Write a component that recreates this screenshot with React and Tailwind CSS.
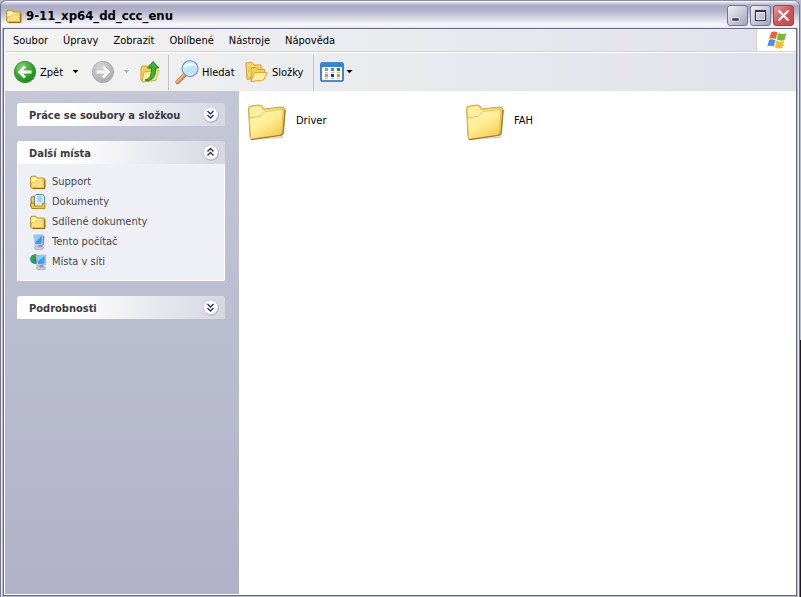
import React from "react";

const SmallFolder = ({ className = "w-4 h-4" }) => (
  <svg viewBox="0 0 16 16" className={className} aria-hidden="true">
    <path d="M0.600 4Q0.600 2.200 2.200 2.200H5.800L7.300 4H13.200Q14.800 4 14.800 5.500V13L13.500 14.500H2.200L0.600 13Z" fill="#e9bb3c" stroke="#b98d1c" strokeWidth="0.900" />
    <path d="M1.300 4.300Q1.300 3 2.800 3H5.500L7 4.800H13V7H6.500L5 9H1.300Z" fill="#fff4ae" />
    <path d="M1.500 13.500V8.500H5L6.500 6.800H13.500V13.500Z" fill="#fde27c" stroke="#e2ae2c" strokeWidth="0.600" />
    <path d="M14.900 5.500V14.600H3" fill="none" stroke="#80601a" strokeWidth="0.900" />
  </svg>
);

const DocumentsIcon = () => (
  <svg viewBox="0 0 16 16" className="w-4 h-4" aria-hidden="true">
    <path d="M1 4Q1 2.500 2.500 2.500H7V14.500H2.500L1 13Z" fill="#f3c94a" stroke="#a87a10" />
    <path d="M6 0.500H12.500L14.500 2.500V11H4.500V2Z" fill="#eaf5ff" stroke="#4a86c8" />
    <path d="M7 3H12M7 5H12.500M7 7H12.500" stroke="#6db1ea" />
    <path d="M1 9H4.500V12H12.500V9H15V14.500H2L1 13.500Z" fill="#f3c64a" stroke="#a87a10" strokeWidth="0.800" />
    <path d="M5 9H12V11.500H5Z" fill="#d7e8f6" />
  </svg>
);

const ComputerIcon = () => (
  <svg viewBox="0 0 16 16" className="w-4 h-4" aria-hidden="true">
    <ellipse cx="9" cy="13.800" rx="4.700" ry="1.900" fill="#cfcee3" stroke="#8785ab" strokeWidth="0.600" />
    <path d="M8 10L12 9.500V13L8.500 13.500Z" fill="#9390b8" />
    <path d="M12 1L14.500 2L13.800 11L11 12Z" fill="#7f86b4" />
    <path d="M3.500 0.800L13 0.600L12.500 10.800L5 11.200Z" fill="#d5e0f3" stroke="#a0b0d4" strokeWidth="0.500" />
    <path d="M4.500 1.700L12.200 1.500L11.700 9.800L5.600 10.200Z" fill="#3a9fee" />
    <path d="M4.500 1.700L12.200 1.500L5.300 8Z" fill="#86d0fb" />
  </svg>
);

const NetworkIcon = () => (
  <svg viewBox="0 0 16 16" className="w-4 h-4" aria-hidden="true">
    <circle cx="5" cy="5.200" r="4.800" fill="#2677ca" />
    <path d="M1 3Q3 0 6 0.600L7 4L4 5L5 9.500Q1 8.500 0.300 5Z" fill="#35a43a" />
    <ellipse cx="11" cy="14" rx="4.600" ry="1.800" fill="#cfcee3" stroke="#8785ab" strokeWidth="0.600" />
    <path d="M9.500 10H13.500V13.500H10Z" fill="#9390b8" />
    <path d="M6 1.500L15.600 1V10.500L7 11.500Z" fill="#d5e0f3" stroke="#8c9ac6" strokeWidth="0.700" />
    <path d="M7 2.500L14.700 2V9.500L8 10.300Z" fill="#3a9fee" />
    <path d="M7 2.500L14.700 2L7.600 7.500Z" fill="#86d0fb" />
  </svg>
);

const LargeFolder = () => (
  <svg viewBox="0 0 40 40" className="w-10 h-10 shrink-0" aria-hidden="true">
    <defs>
      <linearGradient id="folderFront" x1="0" y1="0" x2="0.700" y2="1">
        <stop offset="0" stopColor="#fff8b8" />
        <stop offset="0.500" stopColor="#ffee98" />
        <stop offset="1" stopColor="#f9cd50" />
      </linearGradient>
    </defs>
    <path d="M5 39L36 35L39 9L36 37Z" fill="#b5a98a" opacity="0.500" />
    <path d="M3 36L1.500 8Q1.500 5 4.500 5L12 4Q15 4 16 6.500L17 8L34 6Q38 6 38 9L36 32Q36 34 34 34L5 38Z" fill="#f3cd5b" stroke="#cfa745" />
    <path d="M2.500 9Q2.500 6 5 6L12 5Q14 5 15 8L16 9.500L33 7.500L35 10L18 12L14 16L3.500 17Z" fill="#fff0a0" />
    <path d="M2.500 18.500Q2.500 16.500 5 16.500L13 15.500L18 10.500L34 8.500Q36.500 8.500 36 11.500L34.500 31Q34.500 33.500 32 34L5 38.300Q3.500 38.500 3.500 36Z" fill="url(#folderFront)" stroke="#dfb548" strokeWidth="0.800" />
    <path d="M4 38.600L33 34.500Q36 34 36.300 31L38.200 9" fill="none" stroke="#98762a" strokeWidth="1.200" />
  </svg>
);

const RoundArrow = ({ forward = false }) => (
  <svg viewBox="0 0 24 24" className="w-6 h-6 shrink-0" aria-hidden="true">
    <defs>
      <radialGradient id="backFill" cx="0.350" cy="0.250" r="0.800">
        <stop offset="0" stopColor="#7cd56d" />
        <stop offset="0.500" stopColor="#3fac35" />
        <stop offset="1" stopColor="#16851a" />
      </radialGradient>
      <radialGradient id="forwardFill" cx="0.350" cy="0.250" r="0.800">
        <stop offset="0" stopColor="#d6d6d6" />
        <stop offset="1" stopColor="#a9a9a9" />
      </radialGradient>
    </defs>
    <circle
      cx="12"
      cy="12"
      r="10.600"
      fill={forward ? "url(#forwardFill)" : "url(#backFill)"}
      stroke={forward ? "#adadad" : "#2d8f2c"}
    />
    <path
      d={forward ? "M5.500 12H17M12 6.500L17.500 12L12 17.500" : "M18.500 12H7M12 6.500L6.500 12L12 17.500"}
      fill="none"
      stroke={forward ? "#f7f7f7" : "#fff"}
      strokeWidth="2.800"
    />
  </svg>
);

const UpFolderIcon = () => (
  <svg viewBox="0 0 22 24" className="w-[22px] h-6" aria-hidden="true">
    <path d="M2 8L3 6H8L10 8L17 7V20L4 22L2 20Z" fill="#f5ce5a" stroke="#d3a12c" />
    <path d="M5 12L20 10L17 20L3 22Z" fill="#fff0a0" stroke="#dcae3b" />
    <path d="M6 20Q13 19 12.500 8H8.500L14 1.500L20 8H16.500Q18 18 9 21Z" fill="#3cb234" stroke="#1b7d1b" strokeWidth="0.900" />
  </svg>
);

const SearchIcon = () => (
  <svg viewBox="0 0 26 26" className="w-[26px] h-[26px]" aria-hidden="true">
    <path d="M3.500 23L11 15.500" stroke="#b06a35" strokeWidth="4.200" strokeLinecap="round" />
    <path d="M3.200 22.700L11 15" stroke="#f0aa6e" strokeWidth="2.800" strokeLinecap="round" />
    <circle cx="16" cy="9.500" r="7.800" fill="#bfe4fd" stroke="#7c9bd6" strokeWidth="1.600" />
    <path d="M10.500 9Q11 4 16 4Q20 4 21 7Q15 6 10.500 9Z" fill="#f4fcff" />
    <circle cx="16" cy="9.500" r="6.700" fill="none" stroke="#f0f9ff" strokeWidth="0.800" />
  </svg>
);

const FoldersIcon = () => (
  <svg viewBox="0 0 24 24" className="w-6 h-6" aria-hidden="true">
    <path d="M1 4Q1 2.500 2.500 2.500H7L9 5H16V17L2 19.500Z" fill="#f9d767" stroke="#d3a12c" />
    <path d="M2.500 17L4 8H18L15 17Z" fill="#ffef9f" stroke="#dcb041" strokeWidth="0.800" />
    <path d="M6 9L7 7.500H11L13 9.500H19.500V19L6 21.500Z" fill="#f7cf59" stroke="#d3a12c" />
    <path d="M6 21.500L9.500 12.500H22.500L18.500 20Z" fill="#fff0a0" stroke="#d7a532" strokeWidth="0.900" />
  </svg>
);

const ViewsIcon = () => (
  <svg viewBox="0 0 24 20" className="w-6 h-5" aria-hidden="true">
    <rect x="1" y="1" width="22" height="18" rx="1" fill="#fff" stroke="#1769be" strokeWidth="1.600" />
    <path d="M1 1H23V5H1Z" fill="#2b86dc" />
    <rect x="5" y="6" width="3" height="3" fill="#9b98bd" />
    <rect x="11" y="6" width="3" height="3" fill="#3e8ad8" />
    <rect x="17" y="6" width="3" height="3" fill="#258d2e" />
    <rect x="5" y="12" width="3" height="3" fill="#ee8150" />
    <rect x="11" y="12" width="3" height="3" fill="#17368d" />
    <rect x="17" y="12" width="3" height="3" fill="#c5a12d" />
    <path d="M5 10.500H8M11 10.500H14M17 10.500H20M5 16.500H8M11 16.500H14M17 16.500H20" stroke="#b7c2d4" />
  </svg>
);

const Caret = ({ className = "text-black" }) => (
  <svg viewBox="0 0 7 4" className={`w-[7px] h-1 shrink-0 ${className}`} aria-hidden="true">
    <path d="M0.500 0H6.500L3.500 3.200Z" fill="currentColor" />
  </svg>
);

const WindowsFlag = () => (
  <svg viewBox="0 0 20 18" className="w-5 h-[18px]" aria-hidden="true">
    <path d="M4 1.500Q7 -0.500 10.500 1.500L8.800 8Q5.500 6.500 2.300 8Z" fill="#ec6430" />
    <path d="M11.500 2Q15 4 19.500 2.200L17.500 9Q14 10.500 9.800 8.500Z" fill="#7cbb31" />
    <path d="M2 9Q5 7.500 8.500 9L6.800 15.500Q3.500 14 0.300 15.500Z" fill="#4c8fe4" />
    <path d="M9.500 9.600Q13 11.500 17.200 10L15.500 16.500Q12 18.500 7.800 16.200Z" fill="#f7bd2b" />
  </svg>
);

const Chevrons = ({ up = false }) => (
  <svg viewBox="0 0 18 18" className="w-[18px] h-[18px]" aria-hidden="true">
    <circle cx="9.200" cy="9" r="7.900" fill="#b4b6c8" />
    <circle cx="8.700" cy="8.300" r="7.300" fill="#fff" stroke="#c8c9d6" strokeWidth="0.700" />
    <path
      d={up ? "M5.500 7.500L8.500 4.500L11.500 7.500M5.500 11.500L8.500 8.500L11.500 11.500" : "M5.500 5L8.500 8L11.500 5M5.500 9L8.500 12L11.500 9"}
      fill="none"
      stroke="#2a3155"
      strokeWidth="1.400"
    />
  </svg>
);

const CaptionButton = ({ label, close = false, children }) => (
  <button
    type="button"
    aria-label={label}
    className={`w-[21px] h-[21px] rounded-[3px] border flex items-center justify-center ${
      close
        ? "border-[#8a4a5c] bg-linear-to-br from-[#e99a98] via-[#d0575a] to-[#c4494f]"
        : "border-[#74768f] bg-linear-to-br from-[#f4f4f8] via-[#c9cada] to-[#a2a4bd]"
    }`}
  >
    <svg viewBox="0 0 19 19" className="w-[19px] h-[19px]" aria-hidden="true">
      {children}
    </svg>
  </button>
);

const TitleBar = () => (
  <header className="h-7 pl-[5px] pr-[5px] pt-0.5 flex items-center justify-between rounded-t-md border-t border-[#8e8da6] bg-[linear-gradient(180deg,#ffffff_0%,#d3d3e0_7%,#a9a9c4_18%,#b3b3ca_35%,#d2d2e0_60%,#f8f8fb_88%,#e6e6ef_100%)]">
    <div className="flex items-center gap-1">
      <SmallFolder />
      <h1 className="pt-px text-[13px] leading-4 font-bold text-black">9-11_xp64_dd_ccc_enu</h1>
    </div>
    <div className="flex gap-0.5">
      <CaptionButton label="Minimalizovat">
        <path d="M4 12H11V15H4Z" fill="#343650" stroke="#fff" strokeWidth="0.500" />
      </CaptionButton>
      <CaptionButton label="Maximalizovat">
        <path d="M4.500 4.500H14.500V14.500H4.500Z" fill="none" stroke="#343650" strokeWidth="1.200" />
        <path d="M4 5H15" stroke="#343650" strokeWidth="2" />
        <path d="M5.500 6.500H13.500V13.500H5.500Z" fill="none" stroke="#f4f4fa" strokeWidth="0.700" />
      </CaptionButton>
      <CaptionButton label="Zavřít" close>
        <path d="M4.500 4.500L14.500 14.500M14.500 4.500L4.500 14.500" stroke="#fff" strokeWidth="2.200" />
      </CaptionButton>
    </div>
  </header>
);

const menus = ["Soubor", "Úpravy", "Zobrazit", "Oblíbené", "Nástroje", "Nápověda"];

const MenuBar = () => (
  <nav className="h-6 flex border-b border-white bg-linear-to-r from-[#f3f3f1] to-[#e0e2ec]">
    <div className="flex-1 flex items-center gap-[15px] pt-0.5 pl-2 border-b border-[#d7d3c3]">
      {menus.map((menu) => (
        <button key={menu} type="button">
          {menu}
        </button>
      ))}
    </div>
    <div className="w-10 flex items-center justify-center bg-white border-l border-b border-[#d7d3c3]">
      <WindowsFlag />
    </div>
  </nav>
);

const Separator = () => <div className="w-px h-[35px] bg-[#c1c1c6]" />;

const Toolbar = () => (
  <div className="h-[38px] flex items-center pl-2 bg-linear-to-r from-[#f3f3f1] to-[#e0e2ec]">
    <button type="button" className="w-[78px] flex items-center gap-[3px]">
      <RoundArrow />
      <span className="pt-px">Zpět</span>
      <Caret className="ml-1.5 text-black" />
    </button>
    <button type="button" aria-label="Vpřed" disabled className="w-12 flex items-center gap-2">
      <RoundArrow forward />
      <Caret className="text-[#b5b5b5]" />
    </button>
    <button type="button" aria-label="Nahoru" className="w-[29px]">
      <UpFolderIcon />
    </button>
    <Separator />
    <button type="button" className="w-[76px] pl-[5px] flex items-center gap-0.5">
      <SearchIcon />
      <span className="pt-px">Hledat</span>
    </button>
    <button type="button" className="w-[68px] flex items-center gap-[3px]">
      <FoldersIcon />
      <span className="pt-px">Složky</span>
    </button>
    <Separator />
    <button type="button" aria-label="Zobrazení" className="pl-1.5 flex items-center gap-0.5">
      <ViewsIcon />
      <Caret />
    </button>
  </div>
);

const places = [
  { name: "Support", Icon: SmallFolder },
  { name: "Dokumenty", Icon: DocumentsIcon },
  { name: "Sdílené dokumenty", Icon: SmallFolder },
  { name: "Tento počítač", Icon: ComputerIcon },
  { name: "Místa v síti", Icon: NetworkIcon },
];

const TaskPanel = ({ title, open = false, children }) => (
  <section>
    <h2>
      <button
        type="button"
        aria-expanded={open}
        className="w-full h-[23px] pl-3 pr-[5px] flex items-center justify-between rounded-t-[3px] bg-linear-to-r from-white from-25% to-[#d5d7e1] font-bold text-[#3a3a3f]"
      >
        <span className="pt-0.5">{title}</span>
        <Chevrons up={open} />
      </button>
    </h2>
    {children}
  </section>
);

const Sidebar = () => (
  <aside className="w-[234px] shrink-0 pt-3 pl-3 pr-3.5 flex flex-col gap-[15px] bg-linear-to-b from-[#c4c7d6] to-[#b1b2c9]">
    <TaskPanel title="Práce se soubory a složkou" />
    <TaskPanel title="Další místa" open>
      <ul className="pt-2.5 pb-1.5 pl-3 border border-t-0 border-white bg-[#eff0f5]">
        {places.map(({ name, Icon }) => (
          <li key={name} className="h-5">
            <a href="#" className="flex items-center gap-1.5 text-[#46464c]">
              <Icon />
              {name}
            </a>
          </li>
        ))}
      </ul>
    </TaskPanel>
    <TaskPanel title="Podrobnosti" />
  </aside>
);

const folders = ["Driver", "FAH"];

const App = () => {
  return (
    <div className="h-screen flex bg-[#b7b9cf] text-[11px] leading-4 text-black font-['DejaVu_Sans_Condensed','DejaVu_Sans',sans-serif]">
      <div className="flex-1 min-w-0 flex flex-col rounded-t-md border-x border-[#747389]">
        <TitleBar />
        <div className="flex-1 min-h-0 flex flex-col border-x border-[#eeeef5]">
          <div className="flex-1 min-h-0 flex flex-col mx-px mb-px border border-[#6a6980]">
            <div className="flex-1 min-h-0 flex flex-col border-l border-b border-white">
              <MenuBar />
              <Toolbar />
              <div className="flex-1 min-h-0 flex">
                <Sidebar />
                <main className="flex-1 bg-white pt-2.5 pl-2">
                  <ul className="flex">
                    {folders.map((folder) => (
                      <li key={folder} className="w-[218px]">
                        <a href="#" className="flex items-center gap-[9px]">
                          <LargeFolder />
                          {folder}
                        </a>
                      </li>
                    ))}
                  </ul>
                </main>
              </div>
            </div>
          </div>
        </div>
      </div>
      <div className="w-px bg-linear-to-b from-[#b8bcd0] from-57% to-[#1b1a18] to-57%" />
    </div>
  );
};

export default App;
